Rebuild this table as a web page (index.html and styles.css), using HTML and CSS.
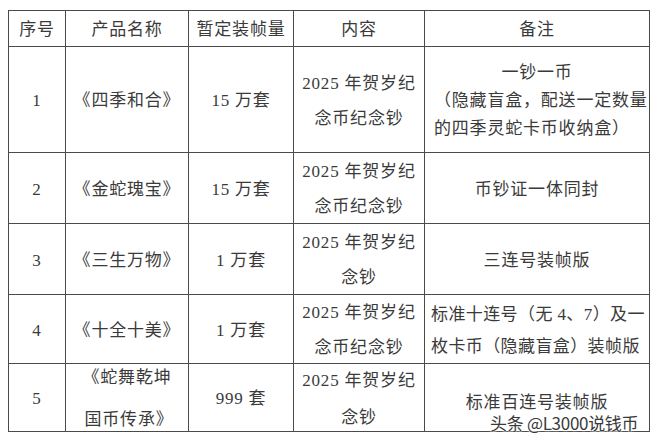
FILE: index.html
```html
<!DOCTYPE html>
<html lang="zh-CN">
<head>
<meta charset="utf-8">
<title>2025 贺岁纪念钞装帧</title>
<link rel="stylesheet" href="styles.css">
</head>
<body>
<div class="page">
  <table class="grid">
    <colgroup>
      <col class="c-no">
      <col class="c-name">
      <col class="c-qty">
      <col class="c-content">
      <col class="c-note">
    </colgroup>
    <thead>
      <tr class="r-head">
        <th>序号</th>
        <th>产品名称</th>
        <th>暂定装帧量</th>
        <th>内容</th>
        <th>备注</th>
      </tr>
    </thead>
    <tbody>
      <tr class="r1">
        <td>1</td>
        <td>《四季和合》</td>
        <td>15 万套</td>
        <td><div class="stack g13"><span>2025 年贺岁纪</span><span>念币纪念钞</span></div></td>
        <td><div class="stack g6"><span>一钞一币</span><span class="left">（隐藏盲盒，配送一定数量</span><span class="left">的四季灵蛇卡币收纳盒）</span></div></td>
      </tr>
      <tr class="r2">
        <td>2</td>
        <td>《金蛇瑰宝》</td>
        <td>15 万套</td>
        <td><div class="stack g13"><span>2025 年贺岁纪</span><span>念币纪念钞</span></div></td>
        <td>币钞证一体同封</td>
      </tr>
      <tr class="r3">
        <td>3</td>
        <td>《三生万物》</td>
        <td>1 万套</td>
        <td><div class="stack g13"><span>2025 年贺岁纪</span><span>念钞</span></div></td>
        <td>三连号装帧版</td>
      </tr>
      <tr class="r4">
        <td>4</td>
        <td>《十全十美》</td>
        <td>1 万套</td>
        <td><div class="stack g13"><span>2025 年贺岁纪</span><span>念币纪念钞</span></div></td>
        <td class="note-wide"><div class="stack g10"><span>标准十连号（无 4、7）及一</span><span>枚卡币（隐藏盲盒）装帧版</span></div></td>
      </tr>
      <tr class="r5">
        <td>5</td>
        <td><div class="stack g20"><span>《蛇舞乾坤</span><span class="shift">国币传承》</span></div></td>
        <td>999 套</td>
        <td><div class="stack g15"><span>2025 年贺岁纪</span><span>念钞</span></div></td>
        <td class="note-low">标准百连号装帧版</td>
      </tr>
    </tbody>
  </table>
  <div class="watermark">头条 @L3000说钱币</div>
</div>
</body>
</html>
```

FILE: styles.css
```css
html, body {
  margin: 0;
  padding: 0;
  background: #ffffff;
}

.page {
  position: relative;
  width: 660px;
  height: 443px;
  padding: 10px 0 0 8px;
  box-sizing: border-box;
}

.grid {
  border-collapse: collapse;
  table-layout: fixed;
  width: 641px;
  font-family: "Liberation Serif", "Noto Sans CJK SC", serif;
  font-size: 17px;
  letter-spacing: 0.8px;
  color: #3a3a3a;
}

.c-no { width: 57px; }
.c-name { width: 123px; }
.c-qty { width: 105px; }
.c-content { width: 131px; }
.c-note { width: 225px; }

.grid th,
.grid td {
  border: 1px solid #4a4a4a;
  padding: 3px 0 0 0;
  text-align: center;
  vertical-align: middle;
  font-weight: normal;
  line-height: 22px;
  white-space: nowrap;
}

.r-head { height: 36px; }
.r1 { height: 106px; }
.r2 { height: 71px; }
.r3 { height: 71px; }
.r4 { height: 69px; }
.r5 { height: 68px; }

.stack {
  display: flex;
  flex-direction: column;
  align-items: center;
}

.g6 { gap: 6px; }
.g10 { gap: 10px; }
.g13 { gap: 13px; }
.g15 { gap: 15px; }
.g20 { gap: 20px; }

.stack .left {
  align-self: stretch;
  text-align: left;
  padding-left: 9px;
}

.stack .shift {
  padding-left: 4px;
}

.grid .note-wide {
  text-align: left;
  padding-left: 6px;
  letter-spacing: 0.4px;
}

.note-wide .stack {
  align-items: flex-start;
}

.grid .note-low {
  padding-top: 11px;
}

.watermark {
  position: absolute;
  left: 490px;
  top: 412px;
  font-family: "Noto Sans CJK SC", "Noto Sans", sans-serif;
  font-size: 17px;
  line-height: 22px;
  color: #3a3a3a;
  letter-spacing: -0.3px;
  text-shadow: 0 0 2px #ffffff, 0 0 2px #ffffff, 0 0 3px #ffffff;
  white-space: nowrap;
}
```
